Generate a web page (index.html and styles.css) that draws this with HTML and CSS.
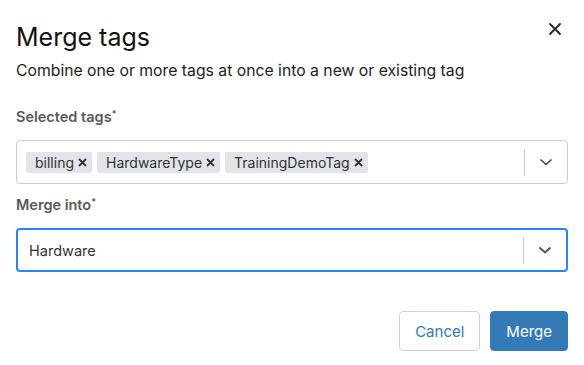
FILE: index.html
```html
<!DOCTYPE html>
<html lang="en">
<head>
  <meta charset="UTF-8">
  <title>Merge tags</title>
  <link rel="stylesheet" href="styles.css">
</head>
<body>
  <div class="modal">
    <div class="modal-header">
      <div>
        <h1 class="title">Merge tags</h1>
        <p class="subtitle">Combine one or more tags at once into a new or existing tag</p>
      </div>
      <button class="close" aria-label="Close">
        <svg width="14" height="14" viewBox="0 0 14 14"><path d="M2 2L12 12M12 2L2 12" stroke="#222" stroke-width="1.8" stroke-linecap="round"/></svg>
      </button>
    </div>

    <div class="field">
      <label class="field-label">Selected tags<sup>*</sup></label>
      <div class="select">
        <div class="select-value">
          <span class="chip">billing <svg class="chip-x" width="9" height="9" viewBox="0 0 9 9"><path d="M1 1L8 8M8 1L1 8" stroke="#333" stroke-width="1.8"/></svg></span>
          <span class="chip">HardwareType <svg class="chip-x" width="9" height="9" viewBox="0 0 9 9"><path d="M1 1L8 8M8 1L1 8" stroke="#333" stroke-width="1.8"/></svg></span>
          <span class="chip">TrainingDemoTag <svg class="chip-x" width="9" height="9" viewBox="0 0 9 9"><path d="M1 1L8 8M8 1L1 8" stroke="#333" stroke-width="1.8"/></svg></span>
        </div>
        <span class="sep"></span>
        <span class="arrow">
          <svg width="14" height="8" viewBox="0 0 14 8"><path d="M1.5 1.5L7 6.5L12.5 1.5" fill="none" stroke="#444" stroke-width="1.6"/></svg>
        </span>
      </div>
    </div>

    <div class="field">
      <label class="field-label">Merge into<sup>*</sup></label>
      <div class="select focused">
        <div class="select-value single">Hardware</div>
        <span class="sep"></span>
        <span class="arrow">
          <svg width="14" height="8" viewBox="0 0 14 8"><path d="M1.5 1.5L7 6.5L12.5 1.5" fill="none" stroke="#555" stroke-width="2"/></svg>
        </span>
      </div>
    </div>

    <div class="actions">
      <button class="btn btn-default">Cancel</button>
      <button class="btn btn-primary">Merge</button>
    </div>
  </div>
</body>
</html>
```

FILE: styles.css
```css
body {
  margin: 0;
  background-color: #fff;
  font-family: Inter, "Noto Sans", Arial, sans-serif;
  color: #222;
}

.modal {
  width: 552px;
  padding: 16px 16px 0 16px;
}

.modal-header {
  display: flex;
  justify-content: space-between;
  align-items: flex-start;
}

.title {
  margin: 5px 0 0 0;
  font-size: 25px;
  font-weight: 400;
  line-height: 32px;
  color: #111;
}

.subtitle {
  margin: 8px 0 0 0;
  font-size: 15.75px;
  line-height: 20px;
  color: #222;
}

.close {
  border: none;
  background: none;
  padding: 0;
  margin: 6px 6px 0 0;
  width: 14px;
  height: 14px;
  cursor: pointer;
}

.field {
  margin-top: 26px;
}

.field + .field {
  margin-top: 11px;
}

.field-label {
  display: block;
  font-size: 14.5px;
  font-weight: 600;
  color: #595959;
  line-height: 20px;
  margin-bottom: 13px;
}

.field-label sup {
  font-size: 9px;
  vertical-align: top;
  position: relative;
  top: -3px;
}

.select {
  display: flex;
  align-items: center;
  height: 44px;
  box-sizing: border-box;
  border: 1px solid #ccc;
  border-radius: 4px;
  background: #fff;
}

.select.focused {
  border: 2px solid #2684ff;
}

.select-value {
  flex: 1;
  display: flex;
  gap: 5px;
  padding-left: 9px;
  align-items: center;
}

.select-value.single {
  padding-left: 11px;
  font-size: 14.5px;
  color: #333;
}

.chip {
  display: flex;
  align-items: center;
  gap: 4px;
  background-color: #e1e5e9;
  border-radius: 2px;
  font-size: 14px;
  line-height: 21px;
  color: #333;
  padding: 0 5px 0 9px;
}

.sep {
  width: 1px;
  height: 26px;
  background-color: #ccc;
}

.arrow {
  width: 42px;
  display: flex;
  justify-content: center;
  align-items: center;
}

.actions {
  display: flex;
  justify-content: flex-end;
  gap: 10px;
  margin-top: 39px;
}

.btn {
  font-family: inherit;
  font-size: 15px;
  height: 40px;
  border-radius: 4px;
  padding: 0 15px;
  cursor: pointer;
}

.btn-default {
  background: #fff;
  border: 1px solid #ccd1d6;
  color: #337ab7;
}

.btn-primary {
  background: #337ab7;
  border: 1px solid #337ab7;
  color: #fff;
}
```
